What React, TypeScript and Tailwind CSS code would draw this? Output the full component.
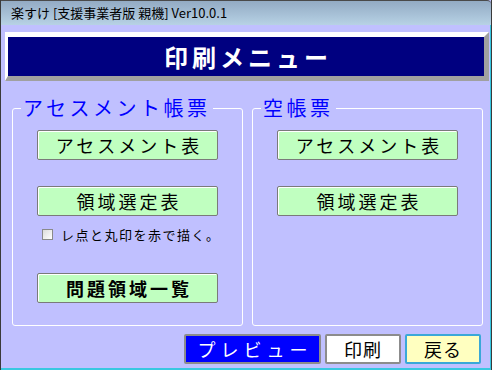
const jp = "font-['MS_UI_Gothic','Noto_Sans_CJK_JP',sans-serif]";

function MenuButton({ label, bold = false }: { label: string; bold?: boolean }) {
  return (
    <button
      className={`w-[181px] h-[30px] bg-[#c0ffc0] border border-[#7a7a7a] rounded-[2px] shadow-[inset_1px_1px_0_#ffffff] text-black text-[18px] leading-none tracking-[3px] pl-[3px] ${
        bold ? 'font-bold' : ''
      }`}
    >
      {label}
    </button>
  )
}

function Group({ title, children }: { title: string; children: React.ReactNode }) {
  return (
    <fieldset className="w-[231px] h-[228px] border border-white rounded-[3px] px-0 pb-0 m-0 min-w-0">
      <legend className="ml-[8px] px-[2px] text-[#0000ff] text-[20px] leading-[20px] tracking-[3.5px]">
        {title}
      </legend>
      <div className="flex flex-col items-center pt-[12px]">{children}</div>
    </fieldset>
  )
}

export default function App() {
  return (
    <div className={`w-[492px] h-[370px] flex flex-col bg-[#c0c0ff] border-l border-r border-[#3a3a3a] ${jp}`}>
      {/* title bar */}
      <div className="h-[25px] shrink-0 flex items-center pl-[10px] bg-gradient-to-b from-[#93abc4] to-[#b7d2e5] border-t border-[#4a4a4a] rounded-tr-[4px] text-[13px] text-black">
        楽すけ [支援事業者版 親機] Ver10.0.1
      </div>

      {/* client */}
      <div className="flex-1 flex flex-col pt-[7px] pl-[4px] pr-[1px] border-r border-[#36c6e0] border-b-2 border-b-[#38c8e0]">
        <div className="h-[49px] bg-[#000080] border-t-[5px] border-l-[3px] border-t-white border-l-white border-b-[5px] border-r-[5px] border-b-[#a0a0a0] border-r-[#a0a0a0] flex items-center justify-center">
          <span className="text-white font-bold text-[24px] leading-none tracking-[4px] pl-[4px]">印刷メニュー</span>
        </div>

        <div className="flex gap-[9px] pl-[7px] mt-[17px]">
          <Group title="アセスメント帳票">
            <MenuButton label="アセスメント表" />
            <div className="mt-[26px]">
              <MenuButton label="領域選定表" />
            </div>
            <label className="self-start flex items-center ml-[29px] mt-[13px] h-[11px] text-[13px] tracking-[1.5px] text-black">
              <span className="w-[11px] h-[11px] border border-[#8a8a8a] bg-gradient-to-br from-[#dcdcdc] to-[#ffffff] mr-[8px]" />
              レ点と丸印を赤で描く。
            </label>
            <div className="mt-[33px]">
              <MenuButton label="問題領域一覧" bold />
            </div>
          </Group>
          <Group title="空帳票">
            <MenuButton label="アセスメント表" />
            <div className="mt-[26px]">
              <MenuButton label="領域選定表" />
            </div>
          </Group>
        </div>

        <div className="flex justify-end gap-[4px] pr-[8px] mt-[8px]">
          <button className="w-[137px] h-[30px] bg-[#0000ff] border-2 border-[#8c8c8c] rounded-[2px] text-white text-[18px] leading-none tracking-[5px] pl-[5px]">
            プレビュー
          </button>
          <button className="w-[76px] h-[30px] bg-white border-2 border-[#8c8c8c] rounded-[2px] text-black text-[18px] leading-none tracking-[1px]">
            印刷
          </button>
          <button className="w-[76px] h-[30px] bg-[#ffffc0] border-2 border-[#3aa8d8] rounded-[2px] text-black text-[18px] leading-none tracking-[1px]">
            戻る
          </button>
        </div>
      </div>
    </div>
  )
}
